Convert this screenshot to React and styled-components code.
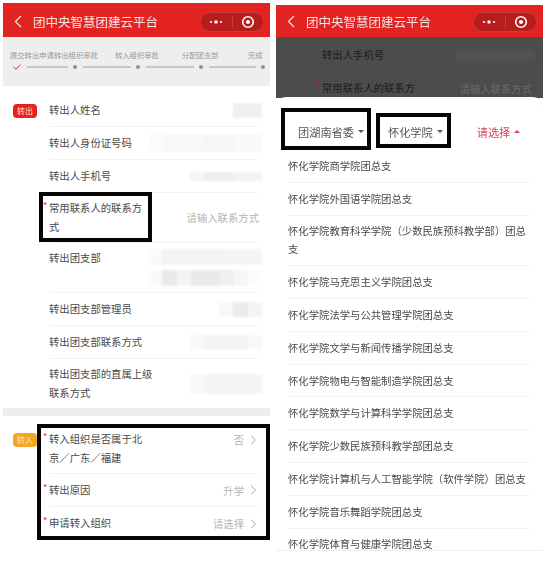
import styled, { createGlobalStyle } from "styled-components";

const GlobalStyle = createGlobalStyle`
  html, body {
    margin: 0;
    background: #fff;
  }
  body {
    font-family: "Noto Sans CJK SC", "Liberation Sans", sans-serif;
  }
`;

//Page
const Page = styled.div`
  width: 547px;
  height: 568px;
  overflow: hidden;
  display: flex;
  align-items: flex-start;
  gap: 6px;
  padding: 3px 0 0 3px;
  box-sizing: border-box;
  filter: blur(0.35px);
`;

const Phone = styled.div`
  position: relative;
  flex: none;
  width: 267px;
  margin-top: ${(p) => p.$top || 0}px;
  display: flex;
  flex-direction: column;
`;

//Header
const Header = styled.div`
  height: 32px;
  padding: ${(p) => (p.$tall ? 2 : 0)}px 6px 0 11px;
  background: #e32322;
  display: flex;
  align-items: center;
  color: #f5e3e3;
`;

const Title = styled.div`
  margin-left: 11px;
  flex: 1;
  font-size: 12.5px;
  white-space: nowrap;
`;

const Capsule = styled.div`
  width: 64px;
  height: 20px;
  margin-top: 1px;
  box-sizing: border-box;
  border-radius: 10px;
  background: #b71d1d;
  border: 1px solid #c83a3a;
  display: flex;
  align-items: center;
`;

const CapsuleSide = styled.div`
  flex: 1;
  display: flex;
  align-items: center;
  justify-content: center;
  border-left: ${(p) => (p.$divided ? "1px solid #c83a3a" : "none")};
  height: 12px;
`;

//Steps
const Steps = styled.div`
  height: 49px;
  background: #eeeeee;
  padding: 13px 0 0 7px;
  box-sizing: border-box;
`;

const StepLabels = styled.div`
  display: grid;
  grid-template-columns: 44px 61px 67px 66px auto;
  font-size: 7.3px;
  line-height: 11px;
  color: #999;
  white-space: nowrap;
`;

const StepTrack = styled.div`
  display: flex;
  align-items: center;
  gap: 5.5px;
  margin-top: 2px;
  padding-left: 3px;
  height: 8px;
`;

const StepBar = styled.div`
  width: ${(p) => p.$w}px;
  height: 1.5px;
  background: #c8c8c8;
`;

const StepDot = styled.div`
  width: 4px;
  height: 4px;
  border-radius: 50%;
  background: #8f8f8f;
`;

//Form sections
const Section = styled.div`
  display: flex;
  padding: ${(p) => p.$pad}px 11px 0 0;
  background: ${(p) => (p.$dark ? "#4c4c4c" : "#fff")};
`;

const BadgeColumn = styled.div`
  flex: none;
  width: 46px;
  padding: ${(p) => p.$top || 0}px 0 0 10px;
  box-sizing: border-box;
`;

const Badge = styled.span`
  display: block;
  width: 24px;
  height: 14px;
  border-radius: 4px;
  background: ${(p) => p.$color};
  color: #fbe9c9;
  font-size: 8px;
  line-height: 14px;
  text-align: center;
`;

const Rows = styled.div`
  flex: 1;
  min-width: 0;
`;

const Row = styled.div`
  display: flex;
  justify-content: space-between;
  align-items: ${(p) => (p.$top ? "flex-start" : "center")};
  min-height: 33px;
  box-sizing: border-box;
  padding: 6px 0;
  border-bottom: ${(p) => (p.$last ? "none" : "1px solid #f3f3f3")};
  &.dim {
    border-bottom-color: #4c4c4c;
  }
`;

const Label = styled.div`
  position: relative;
  width: ${(p) => p.$w || 96}px;
  flex: none;
  font-size: 10.35px;
  line-height: 18.5px;
  color: ${(p) => (p.$dark ? "#1c1c1c" : "#4a4a4a")};
  &::before {
    content: ${(p) => (p.$required ? '"*"' : "none")};
    position: absolute;
    left: -6px;
    top: -2px;
    color: #d9232d;
    font-size: 9px;
  }
`;

const Value = styled.div`
  display: flex;
  align-items: center;
  font-size: 10.35px;
  line-height: 19px;
  white-space: nowrap;
  color: ${(p) => (p.$dark ? "#6a6a6a" : "#b4b4b4")};
`;

//Blurred out values
const MosaicStack = styled.div`
  display: flex;
  flex-direction: column;
  align-items: flex-end;
  gap: 5px;
  margin-right: -3px;
  filter: blur(1.2px);
`;

const MosaicLine = styled.div`
  display: flex;
  height: ${(p) => p.$h}px;
`;

const MosaicCell = styled.div`
  width: ${(p) => p.$w}px;
  background: ${(p) => p.$c};
`;

const Mosaic = ({ lines, height }) => (
  <MosaicStack>
    {lines.map((cells, i) => (
      <MosaicLine key={i} $h={height}>
        {cells.map(([w, c], j) => (
          <MosaicCell key={j} $w={w} $c={c} />
        ))}
      </MosaicLine>
    ))}
  </MosaicStack>
);

const Band = styled.div`
  height: 8px;
  background: #eeeeee;
`;

//Bottom sheet
const DimArea = styled.div`
  height: 61px;
  overflow: hidden;
  background: #4c4c4c;
`;

const Sheet = styled.div`
  height: 453px;
  margin-top: -1px;
  overflow: hidden;
  background: #fff;
  border-radius: 10px 10px 0 0;
  box-shadow: 0 1px 1px #eeeeee;
  padding: 0 12px;
  box-sizing: border-box;
`;

const SheetHead = styled.div`
  height: 53px;
  padding-top: 16px;
  box-sizing: border-box;
  display: flex;
  align-items: center;
  font-size: 11.2px;
  color: #555;
`;

const Picker = styled.div`
  display: flex;
  align-items: center;
  gap: 4px;
  white-space: nowrap;
  margin-left: ${(p) => p.$left}px;
  color: ${(p) => p.$color || "#555"};
`;

const Caret = styled.span`
  width: 0;
  height: 0;
  border-left: 3px solid transparent;
  border-right: 3px solid transparent;
  border-top: ${(p) => (p.$up ? "none" : `3px solid ${p.$color || "#555"}`)};
  border-bottom: ${(p) => (p.$up ? `3px solid ${p.$color}` : "none")};
`;

const OrgRow = styled.div`
  box-sizing: border-box;
  padding: 6.9px 0;
  border-bottom: 1px solid #f3f3f3;
  font-size: 10.35px;
  line-height: 18px;
  color: #4a4a4a;
`;

//Black marks drawn over the screenshot
const Mark = styled.div`
  position: absolute;
  left: ${(p) => p.$x}px;
  top: ${(p) => p.$y}px;
  width: ${(p) => p.$w}px;
  height: ${(p) => p.$h}px;
  box-sizing: border-box;
  border: ${(p) => p.$b}px solid #050505;
`;

const BackIcon = () => (
  <svg width="8" height="13" viewBox="0 0 8 13" fill="none">
    <path d="M7 1 1.5 6.5 7 12" stroke="#f5e3e3" strokeWidth="1.3" />
  </svg>
);

const MoreIcon = () => (
  <svg width="14" height="4" viewBox="0 0 14 4" fill="#fff">
    <circle cx="2" cy="2" r="1.1" />
    <circle cx="7" cy="2" r="1.7" />
    <circle cx="12" cy="2" r="1.1" />
  </svg>
);

const TargetIcon = () => (
  <svg width="14" height="14" viewBox="0 0 14 14" fill="none">
    <circle cx="7" cy="7" r="5.3" stroke="#fff" strokeWidth="1.6" />
    <circle cx="7" cy="7" r="2.1" fill="#fff" />
  </svg>
);

const CheckIcon = () => (
  <svg width="8" height="6" viewBox="0 0 8 6" fill="none">
    <path d="M.5 3 3 5.2 7.5 .8" stroke="#d9232d" strokeWidth="1" />
  </svg>
);

const ChevronIcon = () => (
  <svg width="7" height="10" viewBox="0 0 7 10" fill="none" style={{ margin: "0 2px 0 6px" }}>
    <path d="M1 .7 5.6 5 1 9.3" stroke="#a8a8a8" strokeWidth="1" />
  </svg>
);

const TopBar = ({ tall }) => (
  <Header $tall={tall}>
    <BackIcon />
    <Title>团中央智慧团建云平台</Title>
    <Capsule>
      <CapsuleSide>
        <MoreIcon />
      </CapsuleSide>
      <CapsuleSide $divided>
        <TargetIcon />
      </CapsuleSide>
    </Capsule>
  </Header>
);

const orgs = [
  "怀化学院商学院团总支",
  "怀化学院外国语学院团总支",
  "怀化学院教育科学学院（少数民族预科教学部）团总支",
  "怀化学院马克思主义学院团总支",
  "怀化学院法学与公共管理学院团总支",
  "怀化学院文学与新闻传播学院团总支",
  "怀化学院物电与智能制造学院团总支",
  "怀化学院数学与计算科学学院团总支",
  "怀化学院少数民族预科教学部团总支",
  "怀化学院计算机与人工智能学院（软件学院）团总支",
  "怀化学院音乐舞蹈学院团总支",
  "怀化学院体育与健康学院团总支",
];

export default function App() {
  return (
    <>
      <GlobalStyle />
      <Page>
        <Phone>
          <TopBar tall />
          <Steps>
            <StepLabels>
              <span>提交转出申请</span>
              <span>转出组织审批</span>
              <span>转入组织审批</span>
              <span>分配团支部</span>
              <span>完成</span>
            </StepLabels>
            <StepTrack>
              <CheckIcon />
              <StepBar $w={41} />
              <StepDot />
              <StepBar $w={48} />
              <StepDot />
              <StepBar $w={48} />
              <StepDot />
              <StepBar $w={47} />
              <StepDot />
            </StepTrack>
          </Steps>

          <Section $pad={8}>
            <BadgeColumn $top={10}>
              <Badge $color="#e32322">转出</Badge>
            </BadgeColumn>
            <Rows>
              <Row>
                <Label>转出人姓名</Label>
                <Mosaic height={15} lines={[[[29, "#efefef"]]]} />
              </Row>
              <Row>
                <Label>转出人身份证号码</Label>
                <Mosaic height={18} lines={[[[14, "#fbfbfb"], [40, "#f8f8f8"], [30, "#f6f6f6"], [28, "#f9f9f9"]]]} />
              </Row>
              <Row>
                <Label>转出人手机号</Label>
                <Mosaic height={9} lines={[[[14, "#f5f5f5"], [30, "#eeeeee"], [28, "#f3f3f3"]]]} />
              </Row>
              <Row>
                <Label $required>常用联系人的联系方式</Label>
                <Value>请输入联系方式</Value>
              </Row>
              <Row $top>
                <Label>转出团支部</Label>
                <Mosaic
                  height={16}
                  lines={[
                    [[14, "#fafafa"], [60, "#f3f3f3"], [40, "#f5f5f5"]],
                    [[14, "#fafafa"], [15, "#e9e9e9"], [14, "#f4f4f4"], [29, "#e9e9e9"], [14, "#efefef"], [14, "#f7f7f7"], [14, "#fcfcfc"]],
                  ]}
                />
              </Row>
              <Row>
                <Label>转出团支部管理员</Label>
                <Mosaic height={15} lines={[[[14, "#f8f8f8"], [15, "#ebebeb"], [14, "#f4f4f4"]]]} />
              </Row>
              <Row>
                <Label>转出团支部联系方式</Label>
                <Mosaic height={14} lines={[[[14, "#f8f8f8"], [44, "#f3f3f3"], [14, "#f8f8f8"]]]} />
              </Row>
              <Row $last>
                <Label $w={110}>转出团支部的直属上级联系方式</Label>
                <Mosaic height={20} lines={[[[14, "#f8f8f8"], [58, "#f4f4f4"]]]} />
              </Row>
            </Rows>
          </Section>

          <Band />

          <Section $pad={8}>
            <BadgeColumn $top={9}>
              <Badge $color="#f5a623">转入</Badge>
            </BadgeColumn>
            <Rows>
              <Row $top>
                <Label $required>转入组织是否属于北京／广东／福建</Label>
                <Value>
                  否<ChevronIcon />
                </Value>
              </Row>
              <Row>
                <Label $required>转出原因</Label>
                <Value>
                  升学
                  <ChevronIcon />
                </Value>
              </Row>
              <Row $last>
                <Label $required>申请转入组织</Label>
                <Value>
                  请选择
                  <ChevronIcon />
                </Value>
              </Row>
            </Rows>
          </Section>

          <Mark $x={36} $y={189} $w={113} $h={50} $b={4} />
          <Mark $x={34} $y={421} $w={233} $h={116} $b={4.5} />
        </Phone>

        <Phone $top={2}>
          <TopBar />
          <DimArea>
            <Section $pad={2} $dark>
              <BadgeColumn />
              <Rows>
                <Row className="dim">
                  <Label $dark>转出人手机号</Label>
                  <Mosaic height={12} lines={[[[80, "#525252"]]]} />
                </Row>
                <Row className="dim">
                  <Label $dark $required $w={96}>
                    常用联系人的联系方
                  </Label>
                  <Value $dark>请输入联系方式</Value>
                </Row>
              </Rows>
            </Section>
          </DimArea>
          <Sheet>
            <SheetHead>
              <Picker $left={10}>
                团湖南省委
                <Caret />
              </Picker>
              <Picker $left={24}>
                怀化学院
                <Caret />
              </Picker>
              <Picker $left={34} $color="#df3f57">
                请选择
                <Caret $up $color="#df3f57" />
              </Picker>
            </SheetHead>
            {orgs.map((org) => (
              <OrgRow key={org}>{org}</OrgRow>
            ))}
          </Sheet>

          <Mark $x={5} $y={103} $w={90} $h={42} $b={4.5} />
          <Mark $x={100} $y={108} $w={75} $h={35} $b={4} />
        </Phone>
      </Page>
    </>
  );
}
